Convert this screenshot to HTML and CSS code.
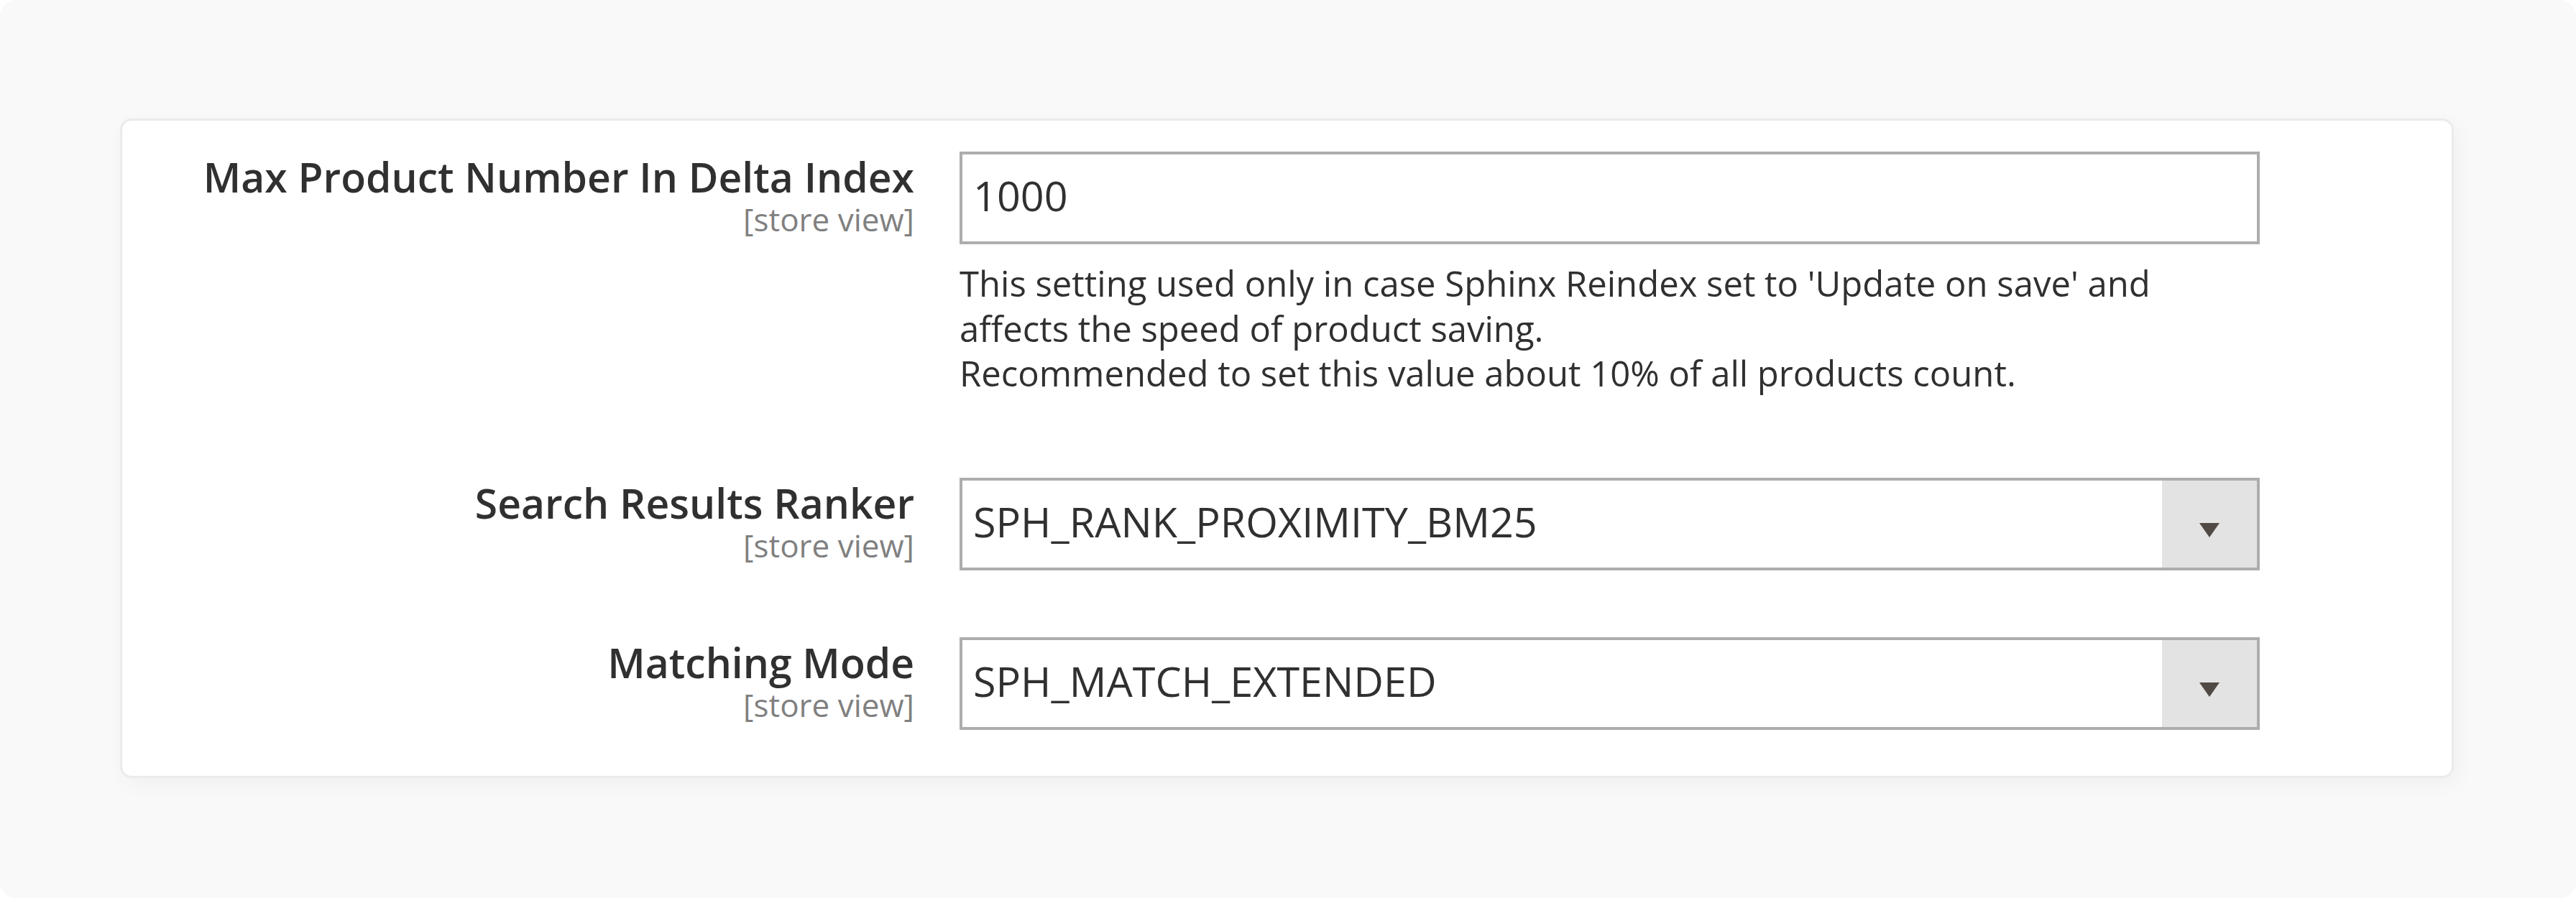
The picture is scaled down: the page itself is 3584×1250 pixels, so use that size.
FILE: index.html
```html
<!DOCTYPE html>
<html lang="en">
<head>
<meta charset="utf-8">
<title>Sphinx Search Settings</title>
<link rel="stylesheet" href="styles.css">
</head>
<body>
<div class="page">
  <div class="card">
    <div class="row">
      <div class="label-col">
        <div class="label">Max Product Number In Delta Index</div>
        <div class="scope">[store view]</div>
      </div>
      <div class="control-col">
        <div class="field">1000</div>
        <div class="note">This setting used only in case Sphinx Reindex set to 'Update on save' and<br>affects the speed of product saving.<br>Recommended to set this value about 10% of all products count.</div>
      </div>
    </div>
    <div class="row row-second">
      <div class="label-col">
        <div class="label">Search Results Ranker</div>
        <div class="scope">[store view]</div>
      </div>
      <div class="control-col">
        <div class="field select">
          <span class="select-value">SPH_RANK_PROXIMITY_BM25</span>
          <span class="select-btn"><span class="arrow"></span></span>
        </div>
      </div>
    </div>
    <div class="row row-third">
      <div class="label-col">
        <div class="label">Matching Mode</div>
        <div class="scope">[store view]</div>
      </div>
      <div class="control-col">
        <div class="field select">
          <span class="select-value">SPH_MATCH_EXTENDED</span>
          <span class="select-btn"><span class="arrow"></span></span>
        </div>
      </div>
    </div>
  </div>
</div>
</body>
</html>
```
FILE: styles.css
```css
html, body {
  margin: 0;
  padding: 0;
  background: #ffffff;
}

body {
  font-family: "Open Sans", "Noto Sans", "Liberation Sans", sans-serif;
  color: #303030;
}

.page {
  width: 3584px;
  height: 1250px;
  box-sizing: border-box;
  background: #f9f9f9;
  border-radius: 22px;
  padding: 165px 0 0 167px;
  overflow: hidden;
}

.card {
  box-sizing: border-box;
  width: 3247px;
  background: #ffffff;
  border: 3px solid #ebebeb;
  border-radius: 16px;
  box-shadow: 6px 8px 30px rgba(0, 0, 0, 0.04);
  padding: 43px 0 64px 0;
}

.row {
  display: grid;
  grid-template-columns: 1102px 1809px;
  column-gap: 63px;
}

.row-second {
  margin-top: 114px;
}

.row-third {
  margin-top: 93px;
}

.label-col {
  text-align: right;
}

.label {
  font-size: 57px;
  line-height: 70px;
  font-weight: 600;
  color: #303030;
  white-space: nowrap;
}

.scope {
  font-size: 44px;
  line-height: 48px;
  color: #808080;
}

.field {
  box-sizing: border-box;
  height: 129px;
  border: 4px solid #adadad;
  background: #ffffff;
  font-size: 57.5px;
  line-height: 115px;
  padding: 0 0 6px 15px;
  color: #303030;
  white-space: nowrap;
}

.select {
  display: flex;
  padding: 0;
}

.select-value {
  flex: 1;
  padding: 0 0 6px 15px;
}

.select-btn {
  width: 132px;
  height: 121px;
  background: #e3e3e3;
  display: flex;
  justify-content: center;
  align-items: flex-start;
  padding-top: 59px;
  box-sizing: border-box;
}

.arrow {
  width: 0;
  height: 0;
  border-left: 14px solid transparent;
  border-right: 14px solid transparent;
  border-top: 20px solid #514943;
}

.note {
  margin-top: 23px;
  font-size: 49px;
  line-height: 62.5px;
  color: #303030;
  white-space: nowrap;
}
```
